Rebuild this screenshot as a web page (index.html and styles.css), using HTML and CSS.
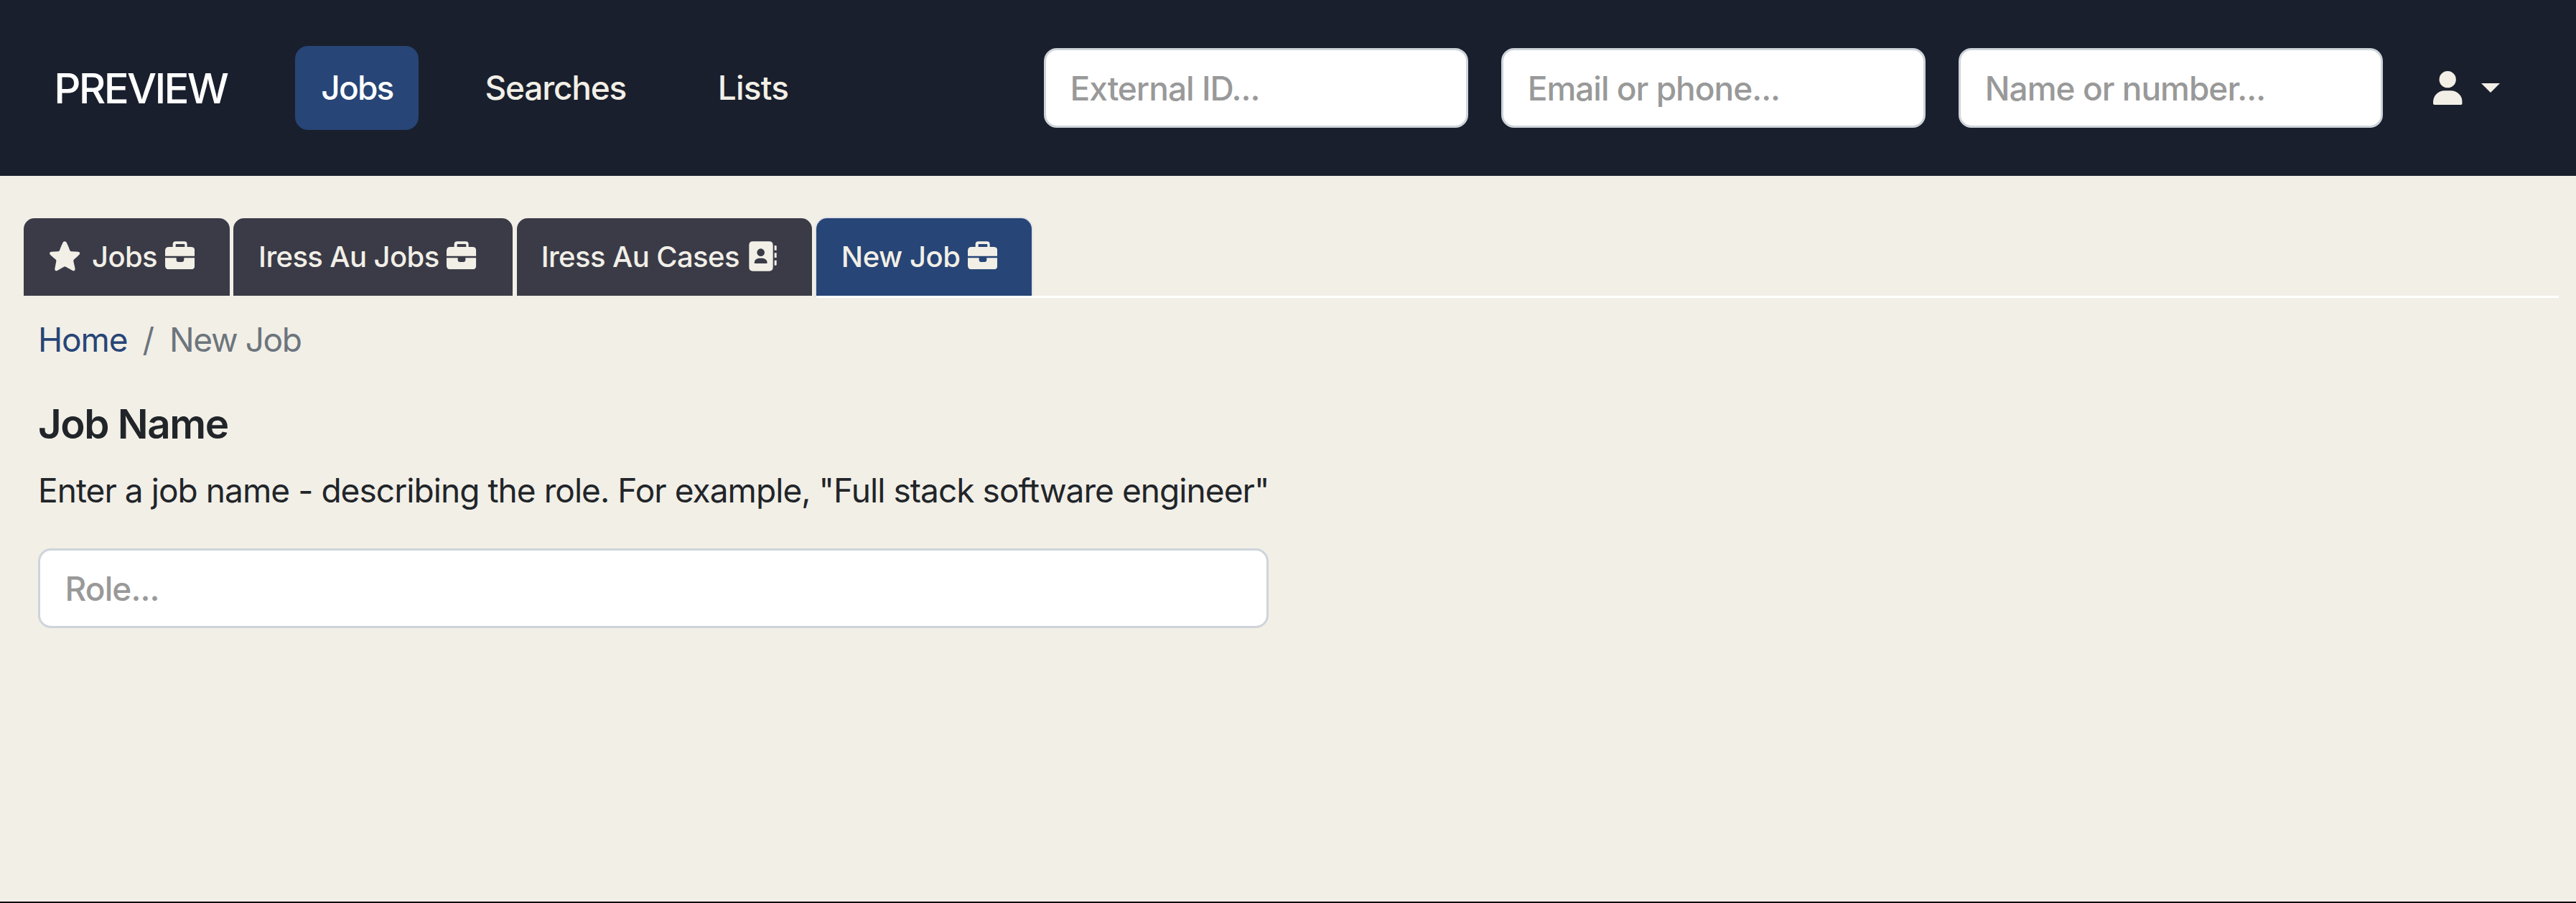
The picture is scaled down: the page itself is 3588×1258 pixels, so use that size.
FILE: index.html
```html
<!DOCTYPE html>
<html lang="en">
<head>
<meta charset="utf-8">
<title>New Job</title>
<link rel="stylesheet" href="styles.css">
</head>
<body>
<svg class="sprite" aria-hidden="true">
  <symbol id="briefcase" viewBox="0 0 124 118">
    <path fill-rule="evenodd" d="M32 24V13Q32 1 44 1H80Q92 1 92 13V24H108Q124 24 124 40V62H0V40Q0 24 16 24ZM44 24H82V15Q82 12 79 12H47Q44 12 44 15Z"/>
    <path d="M0 70H47V78Q47 87 56 87H70Q79 87 79 78V70H124V102Q124 118 108 118H16Q0 118 0 102Z"/>
  </symbol>
  <symbol id="star" viewBox="0 0 127 125">
    <path d="M57 4Q63-3 70 4Q74 10 85 38Q87 43 92 43L120 44Q129 46 126 54Q125 57 103 76Q99 79 100 84L107 115Q107 126 98 124L68 107Q64 105 60 107L31 124Q21 126 22 115L28 84Q29 79 25 76Q3 58 1 54Q-2 46 7 44L35 43Q40 43 42 38Q53 10 57 4Z"/>
  </symbol>
  <symbol id="contacts" viewBox="0 0 117 126">
    <path fill-rule="evenodd" d="M17 1H85Q101 1 101 17V109Q101 125 85 125H17Q1 125 1 109V17Q1 1 17 1ZM50 31A16 16 0 1 0 50 63A16 16 0 1 0 50 31ZM42 71Q24 73 23 90Q23 93 27 93H74Q77 93 77 90Q76 73 58 71Z"/>
    <path d="M107 18H113Q116 18 116 21V38H107ZM107 49H116V69H107ZM107 80H116V98Q116 101 113 101H107Z"/>
  </symbol>
  <symbol id="person" viewBox="0 0 122 141">
    <circle cx="60.5" cy="35" r="35"/>
    <path d="M48 82H74C101 82 122 103 122 130V135Q122 141 116 141H6Q0 141 0 135V130C0 103 21 82 48 82Z"/>
  </symbol>
</svg>

<header class="navbar">
  <a class="brand">PREVIEW</a>
  <nav class="nav">
    <a class="nav-link nav-link-active">Jobs</a>
    <a class="nav-link nav-searches">Searches</a>
    <a class="nav-link nav-lists">Lists</a>
  </nav>
  <form class="search">
    <input class="field search-field" type="text" placeholder="External ID...">
    <input class="field search-field" type="text" placeholder="Email or phone...">
    <input class="field search-field" type="text" placeholder="Name or number...">
  </form>
  <div class="account">
    <svg class="icon-person"><use href="#person"/></svg>
    <span class="caret"></span>
  </div>
</header>

<main class="main">
  <div class="tabs">
    <a class="tab tab-jobs"><svg class="icon-star"><use href="#star"/></svg>Jobs<svg class="icon-briefcase"><use href="#briefcase"/></svg></a>
    <a class="tab tab-au-jobs">Iress Au Jobs<svg class="icon-briefcase"><use href="#briefcase"/></svg></a>
    <a class="tab tab-au-cases">Iress Au Cases<svg class="icon-contacts"><use href="#contacts"/></svg></a>
    <a class="tab tab-active">New Job<svg class="icon-briefcase"><use href="#briefcase"/></svg></a>
    <span class="tabs-rule"></span>
  </div>

  <section class="content">
    <div class="breadcrumb"><a class="crumb-home">Home</a><span>/</span><span class="crumb-current">New Job</span></div>
    <h1 class="title">Job Name</h1>
    <p class="hint">Enter a job name - describing the role. For example, "Full stack software engineer"</p>
    <input class="field role-field" type="text" placeholder="Role...">
  </section>
</main>
</body>
</html>
```
FILE: styles.css
```css
* { box-sizing: border-box; }

body {
  margin: 0;
  height: 1258px;
  overflow: hidden;
  display: flex;
  flex-direction: column;
  background: #f2efe7;
  border-bottom: 2px solid #0b090c;
  color: #212529;
  font: 400 46px/70px Inter, "Liberation Sans", sans-serif;
}

.sprite { display: none; }
svg { display: block; flex: none; fill: currentColor; }

/* Top bar */
.navbar {
  flex: none;
  display: flex;
  align-items: center;
  height: 245.3px;
  padding: 0 106px 0 75.3px;
  background: #191f2c;
  color: #f2efe7;
  white-space: nowrap;
}

.brand {
  width: 336px;
  color: #fff;
  font-size: 58px;
  font-weight: 500;
  letter-spacing: -2.7px;
}

.nav { display: flex; }

.nav-link {
  height: 116.6px;
  padding: 0 35px;
  border-radius: 18px;
  font-weight: 500;
  line-height: 116.6px;
}

.nav-link-active {
  width: 171.8px;
  padding-left: 36px;
  background: #274576;
  color: #fff;
  letter-spacing: -1.79px;
}

.nav-searches { margin-left: 57.5px; letter-spacing: -1.21px; }
.nav-lists { margin-left: 57.5px; letter-spacing: -0.78px; }

.search { display: flex; gap: 46.2px; margin-left: auto; }

.field {
  display: block;
  height: 111px;
  padding: 0 33.5px;
  border: 3px solid #ced4da;
  border-radius: 18px;
  background: #fff;
  font: 500 46px/60px Inter, "Liberation Sans", sans-serif;
  letter-spacing: -1px;
}

.field::placeholder { color: #999; opacity: 1; }

.search-field { width: 591px; }

.account { display: flex; align-items: center; margin-left: 69.7px; }
.icon-person { width: 40.7px; height: 47px; }

.caret {
  margin-left: 26.3px;
  border: 13px solid transparent;
  border-top-color: #f2efe7;
  border-bottom: 0;
}

/* Tabs */
.main { padding: 58.7px 24px 0 33px; }

.tabs { display: flex; height: 111px; }

.tab {
  display: flex;
  align-items: center;
  height: 107.7px;
  margin-right: 5.7px;
  padding-left: 34.8px;
  border-radius: 15px 15px 0 0;
  background: #3a3b47;
  color: #f2efe7;
  font-size: 40px;
  font-weight: 500;
  letter-spacing: -0.6px;
  white-space: nowrap;
}

.tab-jobs { width: 286.6px; padding-left: 36.3px; }
.tab-au-jobs { width: 388.7px; }
.tab-au-cases { width: 411.7px; padding-left: 34px; }

.tab-active {
  width: 300.4px;
  margin-right: 0;
  background: #274576;
  box-shadow: 0 3px 0 #fff, 0 0 0 2px #e2e3e4;
  letter-spacing: -0.45px;
}

.tabs-rule { flex: 1; align-self: flex-end; height: 3.3px; background: #fff; }

.icon-star { width: 42.3px; height: 41.7px; margin: 0 16.4px 1px 0; }
.icon-briefcase { width: 41.3px; height: 39.3px; margin: 0 0 3.4px 10.7px; }
.icon-contacts { width: 39px; height: 42px; margin: 0 0 1px 13.4px; }

/* Page body */
.content { padding-left: 20px; }

.breadcrumb {
  display: flex;
  gap: 21px;
  margin-top: 23px;
  color: #6c757d;
  white-space: nowrap;
}

.crumb-home { color: #274576; letter-spacing: -1.1px; }
.crumb-current { letter-spacing: -1.4px; }

.title {
  margin: 47.6px 0 0;
  font-size: 56.5px;
  font-weight: 600;
  line-height: 70px;
  letter-spacing: -1.45px;
}

.hint { margin: 22px 0 0; letter-spacing: -0.94px; white-space: nowrap; }

.role-field {
  width: 1714px;
  margin-top: 46.7px;
  padding-left: 34.5px;
  letter-spacing: -0.9px;
}
```
